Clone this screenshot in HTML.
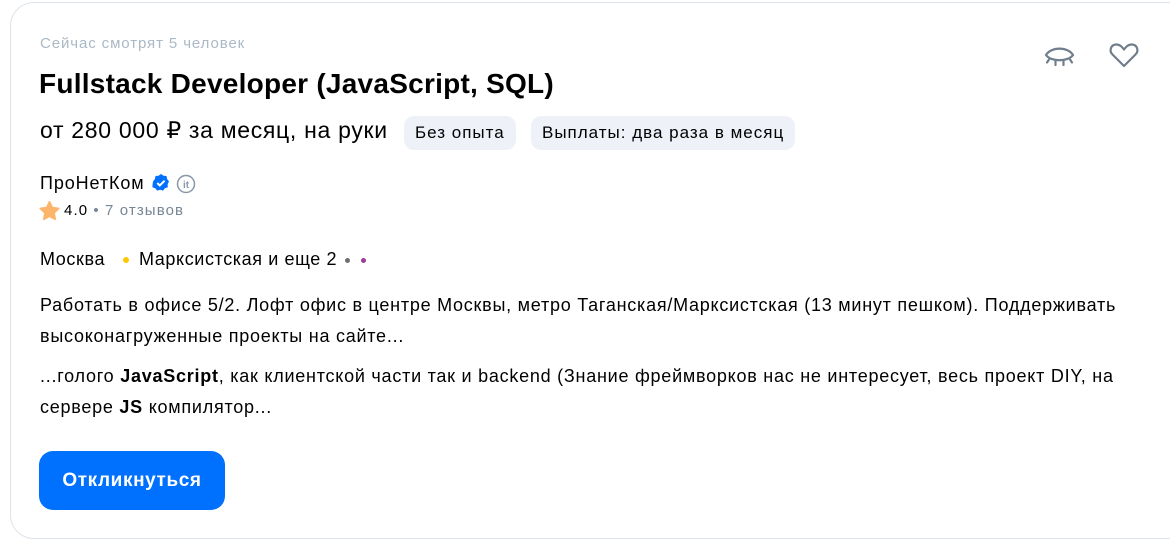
<!DOCTYPE html>
<html><head><meta charset="utf-8"><style>
*{margin:0;padding:0;box-sizing:border-box}
body{width:1170px;height:541px;background:#fff;font-family:"Liberation Sans",Arial,sans-serif;color:#000;position:relative;overflow:hidden}
.card{position:absolute;left:10px;top:2px;width:1180px;height:537px;border:1px solid #dce3eb;border-radius:24px}
.a{position:absolute;white-space:nowrap}
.tag{position:absolute;top:116px;height:34px;background:#eef1f8;border-radius:10px;font-size:17px;line-height:34px;padding:0 11px;color:#000;letter-spacing:1px}
.p{font-size:18px;line-height:31px;letter-spacing:0.75px}
</style></head><body>
<div class="card"></div>
<div class="a" style="left:40px;top:35px;font-size:15px;color:#abb9c6;letter-spacing:0.9px">Сейчас смотрят 5 человек</div>
<div class="a" style="left:39px;top:68px;font-size:28px;font-weight:bold;letter-spacing:0.25px">Fullstack Developer (JavaScript, SQL)</div>
<div class="a" style="left:40px;top:117px;font-size:23px;letter-spacing:0.7px">от 280 000 ₽ за месяц, на руки</div>
<div class="tag" style="left:404px">Без опыта</div>
<div class="tag" style="left:531px">Выплаты: два раза в месяц</div>
<div class="a" style="left:40px;top:173px;font-size:18px;letter-spacing:0.9px">ПроНетКом</div>
<svg class="a" style="left:151px;top:173px" width="20" height="20" viewBox="0 0 20 20"><path d="M10 1l2.5 1.8 3 .2.6 3 1.9 2.5-1.4 2.7.2 3-2.9 1-1.9 2.4-2.9-.9-2.9.9-1.9-2.4-2.9-1 .2-3L2 8.5l1.9-2.5.6-3 3-.2z" fill="#0070ff"/><path d="M6.3 10l2.5 2.5 4.8-4.8" stroke="#fff" stroke-width="2" fill="none"/></svg>
<svg class="a" style="left:176px;top:174px" width="20" height="20" viewBox="0 0 20 20"><circle cx="10" cy="10" r="8.5" stroke="#8a98a6" stroke-width="1.5" fill="none"/><text x="10" y="14" font-size="10" text-anchor="middle" fill="#8a98a6" font-family="Liberation Sans" font-weight="bold">it</text></svg>
<svg class="a" style="left:39px;top:201px" width="21" height="20" viewBox="0 0 24 23"><path d="M12 1l3.2 6.6 7.3 1-5.3 5.1 1.3 7.2L12 17.5l-6.5 3.4 1.3-7.2L1.5 8.6l7.3-1z" fill="#fdb46b" stroke="#fdb46b" stroke-linejoin="round" stroke-width="2"/></svg>
<div class="a" style="left:64px;top:202px;font-size:15px;letter-spacing:1.1px">4.0 <span style="color:#768694">• 7 отзывов</span></div>
<div class="a" style="left:40px;top:249px;font-size:18px;letter-spacing:0.6px">Москва</div>
<div class="a" style="left:123px;top:257px;width:6px;height:6px;border-radius:3px;background:#ffc800"></div>
<div class="a" style="left:139px;top:249px;font-size:18px;letter-spacing:0.6px">Марксистская и еще 2</div>
<div class="a" style="left:345px;top:258px;width:5px;height:5px;border-radius:3px;background:#707070"></div>
<div class="a" style="left:361px;top:258px;width:5px;height:5px;border-radius:3px;background:#9c3e9a"></div>
<div class="a p" style="left:40px;top:290px">Работать в офисе 5/2. Лофт офис в центре Москвы, метро Таганская/Марксистская (13 минут пешком). Поддерживать<br>высоконагруженные проекты на сайте...</div>
<div class="a p" style="left:40px;top:361px">...голого <b>JavaScript</b>, как клиентской части так и backend (Знание фреймворков нас не интересует, весь проект DIY, на<br>сервере <b>JS</b> компилятор...</div>
<div class="a" style="left:39px;top:451px;width:186px;height:59px;background:#0070ff;border-radius:14px;color:#fff;font-weight:bold;font-size:19px;line-height:59px;text-align:center;letter-spacing:0.6px">Откликнуться</div>
<svg class="a" style="left:1043px;top:44px" width="33" height="25" viewBox="0 0 33 25"><path d="M3 11C8 2.5 25 2.5 30 11 25 18 8 18 3 11z" stroke="#6f7e8c" stroke-width="2.2" fill="none"/><path d="M6 15.5l-2 3M12.5 17.5v3.5M20.5 17.5v3.5M27 15.5l2 3" stroke="#6f7e8c" stroke-width="2.2" stroke-linecap="round"/></svg>
<svg class="a" style="left:1108px;top:42px" width="32" height="26" viewBox="0 0 32 26"><path d="M16 24L4.5 12.5C1 9 2.5 2.5 8.5 2.5c3.5 0 5.5 2.5 7.5 5 2-2.5 4-5 7.5-5 6 0 7.5 6.5 4 10z" stroke="#6f7e8c" stroke-width="2.2" fill="none" stroke-linejoin="round"/></svg>
</body></html>
